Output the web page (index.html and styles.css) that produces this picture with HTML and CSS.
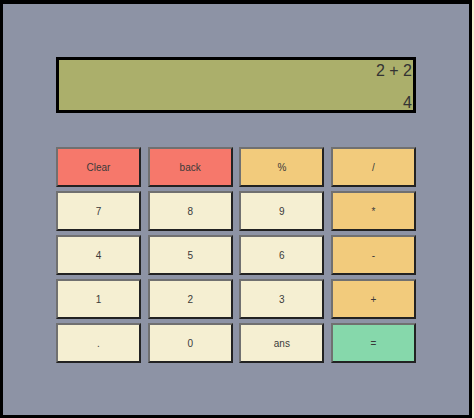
FILE: index.html
```html
<!DOCTYPE html>
<html lang="en">
<head>
  <meta charset="UTF-8" />
  <title>Calculator</title>
  <link rel="stylesheet" href="styles.css">
</head>
<body>
<div class="calculator">
  <div class="display">
    <div class="expr">2 + 2</div>
    <div class="result">4</div>
  </div>
  <div class="keys">
    <button class="key red">Clear</button>
    <button class="key red">back</button>
    <button class="key op">%</button>
    <button class="key op">/</button>

    <button class="key">7</button>
    <button class="key">8</button>
    <button class="key">9</button>
    <button class="key op">*</button>

    <button class="key">4</button>
    <button class="key">5</button>
    <button class="key">6</button>
    <button class="key op">-</button>

    <button class="key">1</button>
    <button class="key">2</button>
    <button class="key">3</button>
    <button class="key op">+</button>

    <button class="key">.</button>
    <button class="key">0</button>
    <button class="key">ans</button>
    <button class="key equals">=</button>
  </div>
</div>
</body>
</html>
```

FILE: styles.css
```css
* {
  box-sizing: border-box;
}

body {
  margin: 0;
  background: #f5f0d2;
  font-family: 'Liberation Sans', Arial, sans-serif;
}

.calculator {
  width: 472px;
  height: 418px;
  background: #8d93a5;
  border: 3px solid #000;
  border-top-width: 4px;
  padding: 53px 53px 0 53px;
}

.display {
  height: 56px;
  background: #abaf6b;
  border: 3px solid #000;
  padding: 3px 1px 0 0;
  display: flex;
  flex-direction: column;
  justify-content: space-between;
  text-align: right;
  font-size: 16px;
  line-height: 16px;
  color: #333;
}

.result {
  margin-bottom: -1px;
}

.keys {
  margin-top: 34px;
  display: grid;
  grid-template-columns: repeat(4, 1fr);
  column-gap: 6.67px;
  row-gap: 4px;
}

.key {
  height: 40px;
  margin: 0;
  padding: 0;
  font-family: 'Liberation Sans', Arial, sans-serif;
  font-size: 10px;
  color: #3a3a3a;
  background: #f5efd2;
  border: 2px solid;
  border-color: #707070 #222 #222 #707070;
  cursor: pointer;
}

.red {
  background: #f6786b;
}

.op {
  background: #f2cb7c;
}

.equals {
  background: #86d8ab;
}
```
